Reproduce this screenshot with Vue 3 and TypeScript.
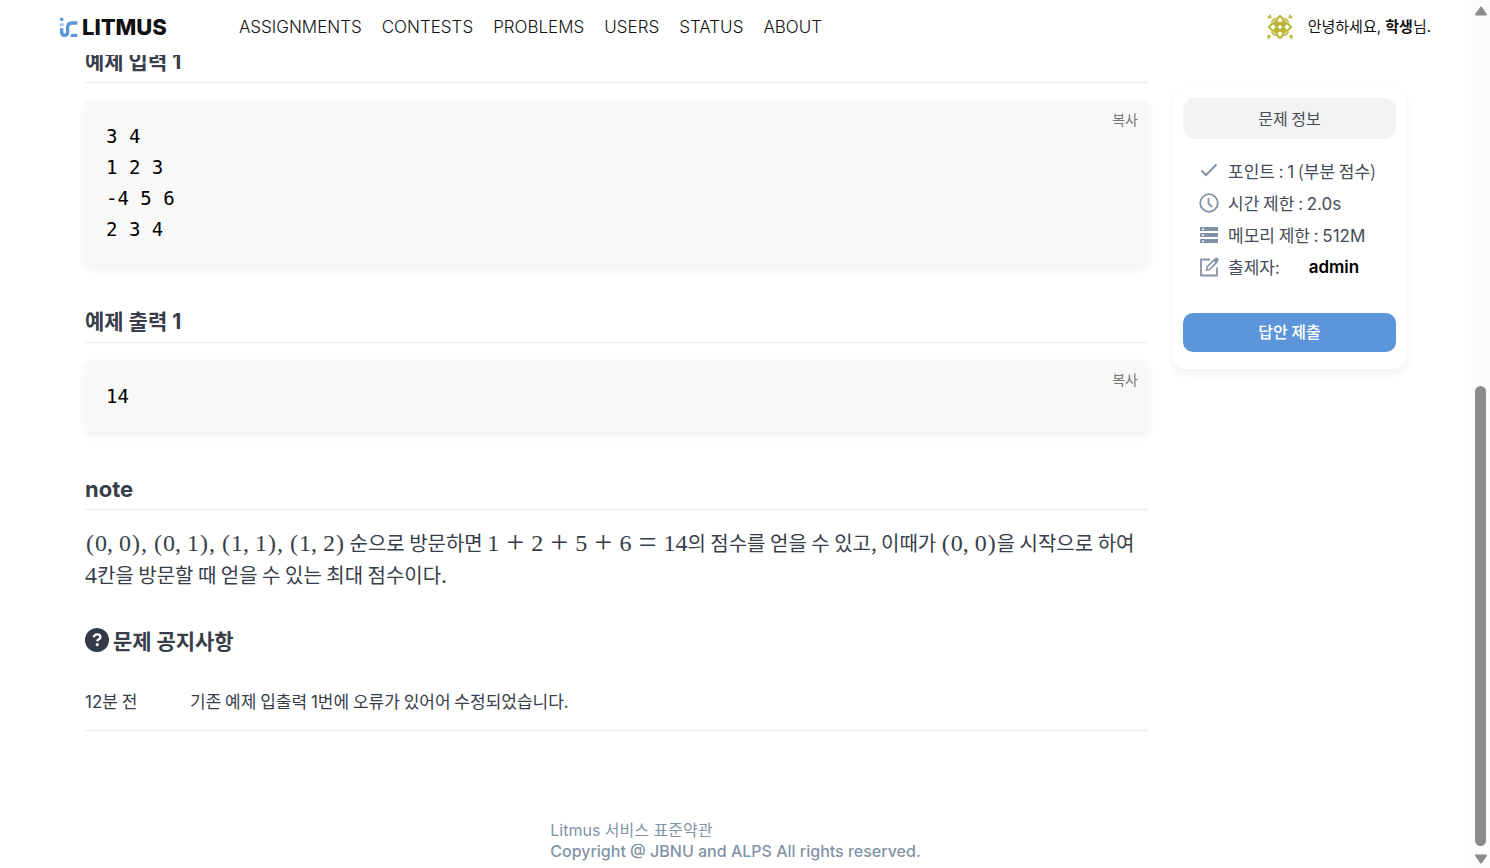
<script setup lang="ts">
import { ref } from 'vue'

const navLinks = ['ASSIGNMENTS', 'CONTESTS', 'PROBLEMS', 'USERS', 'STATUS', 'ABOUT']

const samples = [
  { title: '예제 입력 1', body: '3 4\n1 2 3\n-4 5 6\n2 3 4' },
  { title: '예제 출력 1', body: '14' },
]

const pairs: [number, number][] = [[0, 0], [0, 1], [1, 1], [1, 2]]
const sumTokens = ['1', '+', '2', '+', '5', '+', '6', '=', '14']
const copied = ref(-1)

function copy(index: number) {
  navigator.clipboard?.writeText(samples[index].body)
  copied.value = index
}
</script>

<template>
  <div class="window">
    <div class="page">
      <header class="topbar">
        <a class="brand" href="#" aria-label="LITMUS">
          <svg class="brand-mark" viewBox="58 46 57 63" aria-hidden="true">
            <circle cx="66" cy="53" r="5.5" fill="#5b95da" />
            <path d="M61 65h11v8H61z" fill="#9cc0ea" />
            <path d="M66 80v11q0 10 9 10q9 0 9-10V77q0-13 13-13h16" fill="none" stroke="#5b95da" stroke-width="10" />
            <path d="M92 106q0-10 8-10h13v10z" fill="#5b95da" />
          </svg>
          <span class="brand-name">LITMUS</span>
        </a>
        <nav class="nav">
          <a v-for="link in navLinks" :key="link" href="#">{{ link }}</a>
        </nav>
        <a class="account" href="#">
          <svg class="avatar" viewBox="0 0 24 24" aria-hidden="true">
            <g fill="#bdb536">
              <path d="M12 0.500L15.500 4h2L20 6.500v2L23.500 12L20 15.500v2L17.500 20h-2L12 23.500L8.500 20h-2L4 17.500v-2L0.500 12L4 8.500v-2L6.500 4h2z" />
              <path d="M3 0l1.500 4H0zM21 0l-1.500 4H24zM0 19.500h4L1 24zM24 19.500h-4L23 24z" />
            </g>
            <path d="M12 3l2.500 2.700l-2.500 2.300l-2.500-2.300zM12 16l2.500 2.300l-2.500 2.700l-2.500-2.700zM5.700 9.500l2.300 2.500l-2.300 2.500l-2.700-2.500zM18.300 9.500l2.700 2.500l-2.700 2.500l-2.300-2.500zM12 10l2 2l-2 2l-2-2z" fill="#fff" />
            <path d="M5 8L8 5M19 8L16 5M5 16L8 19M19 16L16 19" fill="none" stroke="#e9e6bd" stroke-width="1" />
          </svg>
          <span>안녕하세요, <b>학생</b>님.</span>
        </a>
      </header>

      <div class="viewport">
        <div class="columns">
          <main class="problem">
            <section v-for="(sample, i) in samples" :key="sample.title">
              <h2 class="ruled">{{ sample.title }}</h2>
              <div class="sample">
                <pre>{{ sample.body }}</pre>
                <button type="button" class="copy" :aria-pressed="copied === i" @click="copy(i)">복사</button>
              </div>
            </section>

            <section>
              <h2 class="ruled latin">note</h2>
              <p class="note">
                <span class="math"><template v-for="(p, i) in pairs" :key="i"><span class="paren">(</span>{{ p[0] }}<span class="comma">,</span>{{ p[1] }}<span class="paren">)</span><span v-if="i < pairs.length - 1" class="comma">,</span></template></span>
                순으로 방문하면
                <span class="math"><template v-for="(t, i) in sumTokens" :key="i"><span :class="{ op: t === '+' || t === '=' }">{{ t }}</span></template></span>의 점수를 얻을 수 있고, 이때가
                <span class="math"><span class="paren">(</span>0<span class="comma">,</span>0<span class="paren">)</span></span>을 시작으로 하여
                <span class="math">4</span>칸을 방문할 때 얻을 수 있는 최대 점수이다.
              </p>
            </section>

            <section>
              <h2 class="notice-title">
                <svg viewBox="0 0 24 24" aria-hidden="true">
                  <circle cx="12" cy="12" r="12" fill="#343b47" />
                  <path d="M8.700 9.300q.6-2.900 3.500-2.900q3.200 0 3.200 2.600q0 1.500-1.700 2.400q-1.400.7-1.400 1.900" fill="none" stroke="#fff" stroke-width="2.300" />
                  <circle cx="12.200" cy="16.600" r="1.600" fill="#fff" />
                </svg>
                문제 공지사항
              </h2>
              <div class="notice">
                <time><span class="num">12</span>분 전</time>
                <span>기존 예제 입출력 <span class="num">1</span>번에 오류가 있어어 수정되었습니다.</span>
              </div>
            </section>
          </main>

          <aside class="info">
            <h3>문제 정보</h3>
            <ul>
              <li>
                <svg viewBox="0 0 20 20" aria-hidden="true"><path d="M2.500 9.500l4.500 4.500L17.500 3.500" fill="none" stroke="#8393a7" stroke-width="2" /></svg>
                <span>포인트 : <span class="num">1</span> (부분 점수)</span>
              </li>
              <li>
                <svg viewBox="0 0 20 20" aria-hidden="true"><circle cx="10" cy="10" r="8.800" fill="none" stroke="#8393a7" stroke-width="1.800" /><path d="M9.500 5v5.500l3.500 3.500" fill="none" stroke="#8393a7" stroke-width="1.800" /></svg>
                <span>시간 제한 : <span class="num">2.0s</span></span>
              </li>
              <li>
                <svg viewBox="0 0 20 20" aria-hidden="true"><path d="M1 2h18v4H1zM1 8h18v4H1zM1 14h18v4H1z" fill="#8393a7" /><path d="M3 3.500h2v1.500H3zM3 9.500h2V11H3zM3 15.500h2V17H3z" fill="#fff" /></svg>
                <span>메모리 제한 : <span class="num">512M</span></span>
              </li>
              <li>
                <svg viewBox="0 0 20 20" aria-hidden="true"><path d="M11 2.500H2v16h16v-8" fill="none" stroke="#8393a7" stroke-width="1.800" stroke-linejoin="round" /><path d="M7.500 13l.5-3l7.500-7.500l2.500 2.500l-7.500 7.500z" fill="none" stroke="#8393a7" stroke-width="1.700" stroke-linejoin="round" /><path d="M14 3.500L16.500 1q1-.8 2 0l.8.8q.8 1 0 2L17 6.500z" fill="#8393a7" /></svg>
                <span>출제자:</span>
                <a class="author num" href="#">admin</a>
              </li>
            </ul>
            <button type="button" class="submit">답안 제출</button>
          </aside>
        </div>

        <footer class="footer">
          <div>
            <a href="#">Litmus 서비스 표준약관</a>
            <p>Copyright @ JBNU and ALPS All rights reserved.</p>
          </div>
        </footer>
      </div>
    </div>

    <div class="scroll" aria-hidden="true">
      <svg viewBox="0 0 14 10"><path d="M7 1.500L12 8.500H2z" fill="#8b8b8b" stroke="#8b8b8b" stroke-width="2" stroke-linejoin="round" /></svg>
      <div class="track"><div class="thumb"></div></div>
      <svg viewBox="0 0 14 10"><path d="M7 8.500L12 1.500H2z" fill="#8b8b8b" stroke="#8b8b8b" stroke-width="2" stroke-linejoin="round" /></svg>
    </div>
  </div>
</template>

<style>
body {
  margin: 0;
  background: #fff;
}
</style>

<style scoped>
.window {
  display: flex;
  height: 100vh;
  overflow: hidden;
  font-family: Inter, "Noto Sans CJK KR", sans-serif;
  color: #373d49;
}
a {
  color: inherit;
  text-decoration: none;
}
button {
  font: inherit;
  border: 0;
  cursor: pointer;
}
h2, h3, p, ul, pre {
  margin: 0;
  padding: 0;
}
.page {
  flex: 1;
  min-width: 0;
  display: flex;
  flex-direction: column;
}

.topbar {
  flex: none;
  box-sizing: border-box;
  display: flex;
  align-items: center;
  height: 55px;
  padding: 0 40px 1px 59px;
  background: #fff;
  color: #111;
}
.brand {
  display: flex;
  align-items: center;
  gap: 4px;
}
.brand-mark {
  width: 19px;
  height: 21px;
}
.brand-name {
  font-size: 22px;
  line-height: 24px;
  font-weight: 800;
}
.nav {
  flex: 1;
  display: flex;
  gap: 20px;
  margin-left: 72px;
  font-size: 17px;
  line-height: 24px;
  font-weight: 300;
}
.account {
  display: flex;
  align-items: center;
  gap: 15px;
  font-size: 15px;
  line-height: 24px;
}
.avatar {
  width: 26px;
  height: 26px;
}

.viewport {
  flex: 1;
  min-height: 0;
  overflow: hidden;
}
.columns {
  display: flex;
  align-items: flex-start;
  gap: 25px;
  margin-top: -50px;
  padding: 0 65px 0 85px;
}
.problem {
  flex: 1;
  min-width: 0;
  font-family: "Noto Sans CJK KR", sans-serif;
}
.num, .latin {
  font-family: Inter, sans-serif;
}
h2 {
  font-size: 21px;
  line-height: 34px;
  font-weight: 700;
}
h2.ruled {
  font-family: Inter, "Noto Sans CJK KR", sans-serif;
}
h2.latin {
  font-size: 22px;
}
.ruled {
  margin: 40px 0 17px;
  padding-bottom: 3px;
  border-bottom: 1px solid #e9ebec;
}
.sample {
  display: flex;
  justify-content: space-between;
  align-items: flex-start;
  padding: 0 10px 0 21px;
  background: #f8f8f8;
  border-radius: 4px;
  box-shadow: 0 4px 8px rgba(0, 0, 0, 0.06);
}
pre {
  padding: 21px 0 20px;
  font-family: "DejaVu Sans Mono", monospace;
  font-size: 19px;
  line-height: 31px;
  color: #000;
}
.copy {
  padding: 9px 0;
  background: none;
  font-size: 14px;
  line-height: 20px;
  color: #777;
}
.note {
  font-size: 20px;
  line-height: 32px;
}
.math {
  font-family: "Liberation Serif", serif;
  font-size: 24px;
  line-height: 24px;
  white-space: nowrap;
}
.paren {
  margin: 0 1px;
}
.comma {
  margin-right: 6px;
}
.op {
  margin: 0 7px;
  font-size: 32px;
  line-height: 24px;
  vertical-align: -2px;
}
.notice-title {
  display: flex;
  align-items: center;
  gap: 4px;
  margin: 32px 0;
}
.notice-title svg {
  width: 24px;
  height: 24px;
}
.notice {
  display: flex;
  padding-bottom: 16px;
  border-bottom: 1px solid #e9ebec;
  font-size: 17px;
  line-height: 24px;
}
.notice time {
  width: 105px;
}

.info {
  flex: none;
  box-sizing: border-box;
  width: 233px;
  margin-top: 83px;
  padding: 10px 10px 17px;
  border-radius: 12px;
  box-shadow: 0 4px 8px rgba(0, 0, 0, 0.06);
  font-family: "Noto Sans CJK KR", sans-serif;
  color: #454b56;
}
h3 {
  padding: 8px 0 9px;
  border-radius: 12px;
  background: #f3f3f3;
  font-size: 16px;
  line-height: 24px;
  font-weight: 400;
  text-align: center;
}
ul {
  margin: 16px 0 30px 16px;
  list-style: none;
}
li {
  display: flex;
  align-items: center;
  gap: 9px;
  height: 32px;
  font-size: 17px;
  line-height: 24px;
  white-space: nowrap;
}
li svg {
  width: 20px;
  height: 20px;
}
.author {
  margin-left: 20px;
  font-weight: 600;
  color: #000;
}
.submit {
  width: 100%;
  padding: 6px 0 9px;
  border-radius: 10px;
  background: #5c95da;
  color: #fff;
  font-size: 16px;
  line-height: 24px;
  font-weight: 500;
}

.footer {
  display: flex;
  justify-content: center;
  margin-top: 89px;
  font-size: 16px;
  line-height: 21px;
  color: #8393a7;
}
.footer a {
  display: block;
}
.footer p {
  font-weight: 500;
}

.scroll {
  flex: none;
  display: flex;
  flex-direction: column;
  align-items: center;
  width: 19px;
  padding: 6px 0 4px;
  box-sizing: border-box;
  background: #fcfcfc;
}
.scroll svg {
  width: 14px;
  height: 10px;
}
.track {
  flex: 1;
  display: flex;
  flex-direction: column;
  justify-content: flex-end;
  padding: 8px 0;
}
.thumb {
  width: 11px;
  height: 56%;
  border-radius: 6px;
  background: #8b8b8b;
}
</style>
